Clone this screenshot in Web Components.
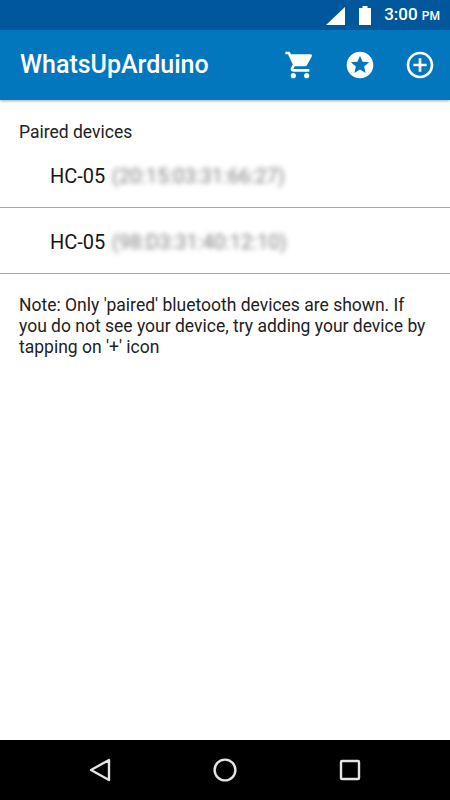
<!DOCTYPE html>
<html><head><meta charset="utf-8"><style>
html,body{margin:0;padding:0;height:100%}
body{width:450px;height:800px;overflow:hidden;font-family:Roboto,sans-serif;background:#fff}
app-screen{height:800px}
</style></head><body>
<app-screen>
  <status-bar slot="top"></status-bar>
  <app-bar slot="top" title="WhatsUpArduino"></app-bar>
  <section-label>Paired devices</section-label>
  <device-row name="HC-05" addr="(20:15:03:31:66:27)"></device-row>
  <device-row tall name="HC-05" addr="(98:D3:31:40:12:10)"></device-row>
  <note-text>Note: Only 'paired' bluetooth devices are shown. If you do not see your device, try adding your device by tapping on '+' icon</note-text>
  <nav-bar slot="bottom"></nav-bar>
</app-screen>
<script>
function def(name,html,init){
  customElements.define(name,class extends HTMLElement{
    constructor(){super();this.attachShadow({mode:'open'}).innerHTML=html;}
    connectedCallback(){if(init)init(this);}
  });
}
def('app-screen',`<style>
:host{display:flex;flex-direction:column;width:450px;background:#fff}
main{flex:1;display:flex;flex-direction:column;min-height:0}
</style><slot name="top"></slot><main><slot></slot></main><slot name="bottom"></slot>`);
def('status-bar',`<style>
:host{display:flex;align-items:center;justify-content:flex-end;height:30px;background:#01579b;color:#fff;padding-right:10px;box-sizing:border-box;position:relative;z-index:2}
svg{display:block}
.sig{margin-right:14px;margin-top:1px}
.bat{margin-right:13px}
.t{font:500 17px/30px Roboto,sans-serif}
small{font-size:12px;font-weight:500;margin-left:0}
</style>
<svg class="sig" width="19" height="18" viewBox="0 0 19 18"><path d="M0 18 19 0V18Z" fill="#fff"/></svg>
<svg class="bat" width="12" height="19" viewBox="0 0 12 19"><path d="M3.500 0h5v2H12V19H0V2h3.500Z" fill="#fff"/></svg>
<span class="t">3:00 <small>PM</small></span>`);
def('app-bar',`<style>
:host{display:flex;align-items:center;height:70px;background:#0277bd;color:#fff;padding:0 14px 0 20px;box-sizing:border-box;box-shadow:0 1px 3px rgba(0,0,0,.35);position:relative;z-index:1}
h1{flex:1;margin:0;font:500 25px/32px Roboto,sans-serif}
.icons{display:flex;align-items:center;gap:28px}
svg{display:block;width:32px;height:32px;fill:#fff}
</style>
<h1></h1>
<div class="icons">
<svg viewBox="0 0 24 24"><path d="M7 18c-1.100 0-1.990.9-1.990 2S5.900 22 7 22s2-.9 2-2-.9-2-2-2zM1 2v2h2l3.600 7.590-1.350 2.450c-.16.280-.25.610-.25.960 0 1.100.9 2 2 2h12v-2H7.420c-.14 0-.25-.11-.25-.25l.03-.12.9-1.630h7.450c.75 0 1.410-.41 1.750-1.030l3.580-6.490A1 1 0 0 0 20 4H5.210l-.94-2H1zm16 16c-1.100 0-1.990.9-1.990 2s.89 2 1.990 2 2-.9 2-2-.9-2-2-2z"/></svg>
<svg viewBox="0 0 24 24"><path d="M11.990 2C6.470 2 2 6.480 2 12s4.470 10 9.990 10C17.520 22 22 17.520 22 12S17.520 2 11.990 2zm4.240 16L12 15.450 7.770 18l1.120-4.810-3.730-3.230 4.920-.42L12 5l1.920 4.530 4.920.42-3.730 3.230L16.230 18z"/></svg>
<svg viewBox="0 0 24 24"><path d="M13 7h-2v4H7v2h4v4h2v-4h4v-2h-4V7zm-1-5C6.480 2 2 6.480 2 12s4.480 10 10 10 10-4.480 10-10S17.520 2 12 2zm0 18c-4.410 0-8-3.590-8-8s3.590-8 8-8 8 3.590 8 8-3.590 8-8 8z"/></svg>
</div>`,el=>{el.shadowRoot.querySelector('h1').textContent=el.getAttribute('title');});
def('section-label',`<style>
:host{display:block;padding:21px 19px 0;font:400 17.500px/22px Roboto,sans-serif;color:#222}
</style><slot></slot>`);
def('device-row',`<style>
:host{display:flex;align-items:center;height:65px;box-sizing:border-box;padding:2px 0 0 50px;border-bottom:1px solid #a8a8a8;font:400 20px/24px Roboto,sans-serif;color:#151515;white-space:nowrap}
:host([tall]){height:66px;padding-top:3px}
.n{margin-right:6.500px}
.a{color:#808080;filter:blur(2.500px)}
</style><span class="n"></span><span class="a"></span>`,el=>{
  el.shadowRoot.querySelector('.n').textContent=el.getAttribute('name');
  el.shadowRoot.querySelector('.a').textContent=el.getAttribute('addr');
});
def('note-text',`<style>
:host{display:block;padding:21px 19px 0;font:400 17.500px/21px Roboto,sans-serif;color:#222}
</style><slot></slot>`);
def('nav-bar',`<style>
:host{display:flex;justify-content:space-between;align-items:center;height:60px;background:#000;padding:0 87px;box-sizing:border-box;margin-top:auto}
svg{display:block;width:26px;height:26px;fill:none;stroke:#e4e4e4;stroke-width:2.400;stroke-linejoin:round}
</style>
<svg viewBox="0 0 26 26"><path d="M4 13 22 3V23Z"/></svg>
<svg viewBox="0 0 26 26"><circle cx="13" cy="13" r="10.400"/></svg>
<svg viewBox="0 0 26 26"><rect x="4" y="4" width="18" height="18" rx="1"/></svg>`);
</script>
</body></html>
